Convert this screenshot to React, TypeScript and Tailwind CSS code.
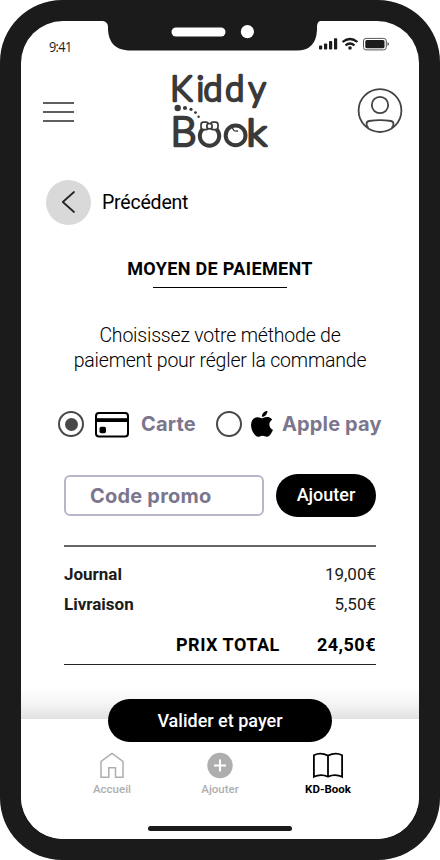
import React from 'react';

interface PaymentOptionProps {
    label: string;
    selected: boolean;
    onSelect: () => void;
    icon: React.ReactNode;
    textClass: string;
}

const Notch = () => (
    <svg className="absolute left-[80px] top-0 w-[224px] h-[31px]" viewBox="0 0 224 31">
        <path d="M0 0H224V0H219Q216 1 216 6V9Q215 29.5 196 29.5H27Q8 28 7 9V6Q7 1 2 0Z" fill="#1b1b1b" />
        <rect x="70.5" y="6.5" width="54" height="9" rx="4.5" fill="#fff" />
        <circle cx="146.4" cy="10.7" r="6.6" fill="#fff" />
    </svg>
);

const StatusIcons = () => (
    <svg className="w-[72px] h-[14px]" viewBox="0 0 72 14">
        <g fill="#1b1b1b">
            <rect x="0" y="8.5" width="3.2" height="4" rx="0.8" />
            <rect x="5" y="6.5" width="3.2" height="6" rx="0.8" />
            <rect x="10" y="4" width="3.2" height="8.5" rx="0.8" />
            <rect x="15" y="1.3" width="3.2" height="11.2" rx="0.8" />
            <circle cx="31" cy="11" r="1.8" />
            <rect x="46.3" y="3" width="19.2" height="8.3" rx="1.5" />
            <path d="M68.6 5Q71 7 68.6 9Z" />
        </g>
        <path d="M23.5 5Q31 -1 38.5 5M26.5 8.3Q31 4.7 35.5 8.3" fill="none" stroke="#1b1b1b" strokeWidth="2.2" />
        <rect x="44.5" y="1.4" width="22.8" height="11.5" rx="2.6" fill="none" stroke="#555" strokeWidth="1" />
    </svg>
);

const Logo = () => (
    <svg
        aria-label="Kiddy Book"
        className="w-[104px] h-[82px] overflow-visible"
        viewBox="168 70 104 82"
        fontFamily="Lato, sans-serif"
        fontWeight="300"
        fill="#3a3a3a"
        stroke="#3a3a3a"
        strokeWidth="2.6"
        strokeLinejoin="round"
    >
        <text x="168.2 194.6 201.6 223.2 246.6" y="100.8" fontSize="34.5">Kiddy</text>
        <text x="168.4" y="145.8" fontSize="41" textLength="26" lengthAdjust="spacingAndGlyphs">B</text>
        <text x="244.4" y="145.8" fontSize="37" textLength="20.5" lengthAdjust="spacingAndGlyphs">k</text>
        {/* the two "o" are baby faces: one with a bow, one with a curl */}
        <g fill="none" strokeWidth="4">
            <circle cx="207.5" cy="136" r="9.7" />
            <circle cx="233.6" cy="135.4" r="9.9" />
        </g>
        <g stroke="none">
            <circle cx="175.7" cy="108" r="3.2" />
            <circle cx="183" cy="108" r="2.1" />
            <circle cx="189" cy="109.3" r="1.6" />
            <circle cx="193.5" cy="112.6" r="1.4" />
            <circle cx="196.6" cy="116.7" r="1.2" />
        </g>
        <g fill="#fff" strokeWidth="1.7">
            <rect x="199" y="122.2" width="7.4" height="7.4" rx="2.6" />
            <rect x="208.6" y="122.2" width="7.4" height="7.4" rx="2.6" />
            <circle cx="207.5" cy="126.2" r="2.7" />
        </g>
        <path d="M230.3 127Q231 132 235.6 131" fill="none" strokeWidth="1.4" strokeLinecap="round" />
    </svg>
);

const ProfileIcon = () => (
    <svg className="w-[46px] h-[46px]" viewBox="0 0 46 46" fill="none" stroke="#444" strokeWidth="1.8">
        <circle cx="23" cy="22.6" r="21.4" />
        <circle cx="23" cy="17" r="8.2" />
        <path d="M11.5 39.5C9 38.5 8.6 33.5 12 33C19 31.9 27 31.9 34 33C37.4 33.5 37 38.5 34.5 39.5" />
    </svg>
);

const CardIcon = () => (
    <svg className="w-[36px] h-[27px]" viewBox="0 0 36 27">
        <rect x="2" y="2" width="32" height="23.4" rx="3" fill="none" stroke="#000" strokeWidth="2" />
        <path d="M2 7.2H34V11H2Z" />
        <rect x="5.5" y="15.8" width="6.5" height="6.5" rx="1.8" />
    </svg>
);

const AppleIcon = () => (
    <svg className="w-[22px] h-[26px]" viewBox="2.2 0.2 19.6 24" preserveAspectRatio="none">
        <path d="M12.15 6.9c-.95 0-2.42-1.08-3.96-1.04-2.04.03-3.91 1.18-4.96 3.01-2.12 3.68-.55 9.1 1.52 12.09 1.01 1.45 2.21 3.09 3.79 3.04 1.52-.07 2.09-.99 3.93-.99 1.83 0 2.35.99 3.96.95 1.64-.03 2.68-1.48 3.68-2.95 1.16-1.69 1.64-3.33 1.66-3.42-.04-.01-3.18-1.22-3.22-4.86-.03-3.04 2.48-4.49 2.6-4.56-1.43-2.09-3.62-2.32-4.39-2.38-2-.16-3.67 1.09-4.61 1.09zM15.53 3.83c.84-1.01 1.4-2.43 1.25-3.83-1.21.05-2.66.8-3.53 1.82-.78.9-1.45 2.34-1.27 3.71 1.34.1 2.72-.69 3.55-1.7" />
    </svg>
);

const HomeIcon = () => (
    <svg className="w-[26px] h-[28px]" viewBox="0 0 26 28" fill="none" stroke="#aeaeae" strokeWidth="1.5">
        <path d="M2 25.2V9.5L13 1.5L24 9.5V25.2H16.5V15.8H9.8V25.2Z" />
    </svg>
);

const PlusIcon = () => (
    <svg className="w-[26px] h-[28px]" viewBox="0 0 26 28">
        <circle cx="13" cy="13.5" r="12.7" fill="#aeaeae" />
        <path d="M13 7.5V19.5M7 13.5H19" stroke="#fff" strokeWidth="2" />
    </svg>
);

const BookIcon = () => (
    <svg className="w-[32px] h-[28px]" viewBox="0 0 32 28" fill="none" stroke="#000" strokeWidth="1.8">
        <path d="M16 3.6Q8.5 0 1.9 3.2V24.8Q8.5 21.4 16 24.6Q23.5 21.4 30.1 24.8V3.2Q23.5 0 16 3.6ZM16 3.6V24.6" />
    </svg>
);

const PaymentOption: React.FC<PaymentOptionProps> = ({ label, selected, onSelect, icon, textClass }) => (
    <button role="radio" aria-checked={selected} onClick={onSelect} className="flex items-center">
        <span className="w-[26px] h-[26px] rounded-full border-[2.5px] border-[#484848] flex items-center justify-center">
            {selected && <span className="w-[13px] h-[13px] rounded-full bg-[#484848]" />}
        </span>
        {icon}
        <span className={`font-[Inter] font-bold text-[20px] leading-6 text-[#7b768e] whitespace-nowrap ${textClass}`}>{label}</span>
    </button>
);

const tabs = [
    { label: 'Accueil', icon: <HomeIcon />, active: false },
    { label: 'Ajouter', icon: <PlusIcon />, active: false },
    { label: 'KD-Book', icon: <BookIcon />, active: true },
];

const lines = [
    { label: 'Journal', price: '19,00€' },
    { label: 'Livraison', price: '5,50€' },
];

export default function App() {
    const [method, setMethod] = React.useState('card');
    const [promo, setPromo] = React.useState('');

    return (
        <div className="w-[440px] h-[860px] bg-[#1b1b1b] rounded-[62px] pt-[21px] pl-[21px] font-[Roboto,sans-serif] text-black">
            <div className="relative w-[398px] h-[818px] bg-white rounded-[42px] overflow-hidden flex flex-col">
                <Notch />
                <div className="flex justify-between items-start h-[48px] pl-[28px] pr-[28px] pt-[16px]">
                    <span className="font-['Open_Sans'] text-[15px] leading-[18px] font-medium tracking-[-0.8px] text-[#1b1b1b] origin-left scale-x-[0.85]">9:41</span>
                    <StatusIcons />
                </div>

                <header className="flex items-start justify-between h-[110px] pl-[22px] pr-[16px]">
                    <button aria-label="Menu" className="mt-[33px] flex flex-col gap-[7px]">
                        <span className="w-[31px] h-[2px] bg-[#5f5f5f]" />
                        <span className="w-[31px] h-[2px] bg-[#5f5f5f]" />
                        <span className="w-[31px] h-[2px] bg-[#5f5f5f]" />
                    </button>
                    <div className="ml-[13px] mt-[1px]"><Logo /></div>
                    <button aria-label="Profil" className="mt-[19px]"><ProfileIcon /></button>
                </header>

                <button className="flex items-center gap-[11px] ml-[25px] w-fit h-[46px]">
                    <span className="w-[45px] h-[45px] rounded-full bg-[#d9d9d9] flex items-center justify-center">
                        <svg className="w-[16px] h-[24px]" viewBox="0 0 16 24" fill="none" stroke="#222" strokeWidth="1.7" strokeLinecap="round" strokeLinejoin="round">
                            <path d="M13 2L1.8 12L13 22" />
                        </svg>
                    </span>
                    <span className="pt-[2px] text-[19.5px] leading-6 tracking-[-0.2px]">Précédent</span>
                </button>

                <h1 className="mt-[32px] text-center text-[18px] leading-6 font-bold tracking-[0.35px]">MOYEN DE PAIEMENT</h1>
                <div className="mx-auto mt-[6px] w-[134px] h-px bg-black" />

                <p className="mt-[35px] text-center text-[19.5px] leading-[25px] tracking-[-0.2px] font-light">
                    Choisissez votre méthode de<br />paiement pour régler la commande
                </p>

                <div role="radiogroup" className="mt-[38px] ml-[37px] flex items-center h-[26px] gap-[20px]">
                    <PaymentOption
                        label="Carte"
                        selected={method === 'card'}
                        onSelect={() => setMethod('card')}
                        icon={<span className="ml-[10px] mr-[11px]"><CardIcon /></span>}
                        textClass="w-[55px] text-left tracking-[0.2px]"
                    />
                    <PaymentOption
                        label="Apple pay"
                        selected={method === 'apple'}
                        onSelect={() => setMethod('apple')}
                        icon={<span className="ml-[9px] mr-[9px]"><AppleIcon /></span>}
                        textClass="tracking-[0.15px]"
                    />
                </div>

                <div className="mt-[37px] ml-[43px] flex items-center gap-[12px]">
                    <input
                        value={promo}
                        onChange={e => setPromo(e.target.value)}
                        placeholder="Code promo"
                        className="w-[200px] h-[41px] border-2 border-[#b9b5ca] rounded-[6px] pl-[24px] pt-[1px] font-[Inter] font-bold text-[20px] tracking-[0.2px] placeholder:text-[#7b768e]"
                    />
                    <button className="w-[100px] h-[43px] rounded-full bg-black text-white text-[18px] font-medium pb-[2px]">Ajouter</button>
                </div>

                <div className="mt-[28px] mx-[43px] border-t-2 border-[#666] pt-[13px] h-[119px] flex flex-col text-[17px]">
                    {lines.map(line => (
                        <div key={line.label} className="flex justify-between h-[30px] leading-[29px] text-[#1b1b1b]">
                            <span className="font-bold">{line.label}</span>
                            <span>{line.price}</span>
                        </div>
                    ))}
                    <div className="mt-[13px] flex justify-between pl-[112px] text-[18px] leading-[24px] font-bold tracking-[0.5px]">
                        <span>PRIX TOTAL</span>
                        <span>24,50€</span>
                    </div>
                </div>
                <div className="mx-[43px] h-px bg-[#222] shrink-0" />

                <div className="mt-[22px] h-[32px] bg-linear-to-t from-[#e2e2e2] via-[#f5f5f5] to-white shrink-0" />
                <nav className="relative flex-1 bg-white">
                    <button className="absolute left-[87px] -top-[20px] w-[224px] h-[43px] rounded-full bg-black text-white text-[18px] font-medium">
                        Valider et payer
                    </button>
                    <div className="flex justify-between pl-[61px] pr-[61px] pt-[33px]">
                        {tabs.map(tab => (
                            <button key={tab.label} className={`flex flex-col items-center w-[60px] text-[11.5px] leading-[16px] ${tab.active ? 'font-bold text-black' : 'font-medium text-[#aeaeae]'}`}>
                                {tab.icon}
                                <span className="mt-[1px]">{tab.label}</span>
                            </button>
                        ))}
                    </div>
                    <div className="absolute bottom-[8px] left-[127px] w-[144px] h-[5px] rounded-full bg-[#1b1b1b]" />
                </nav>
            </div>
        </div>
    );
}
